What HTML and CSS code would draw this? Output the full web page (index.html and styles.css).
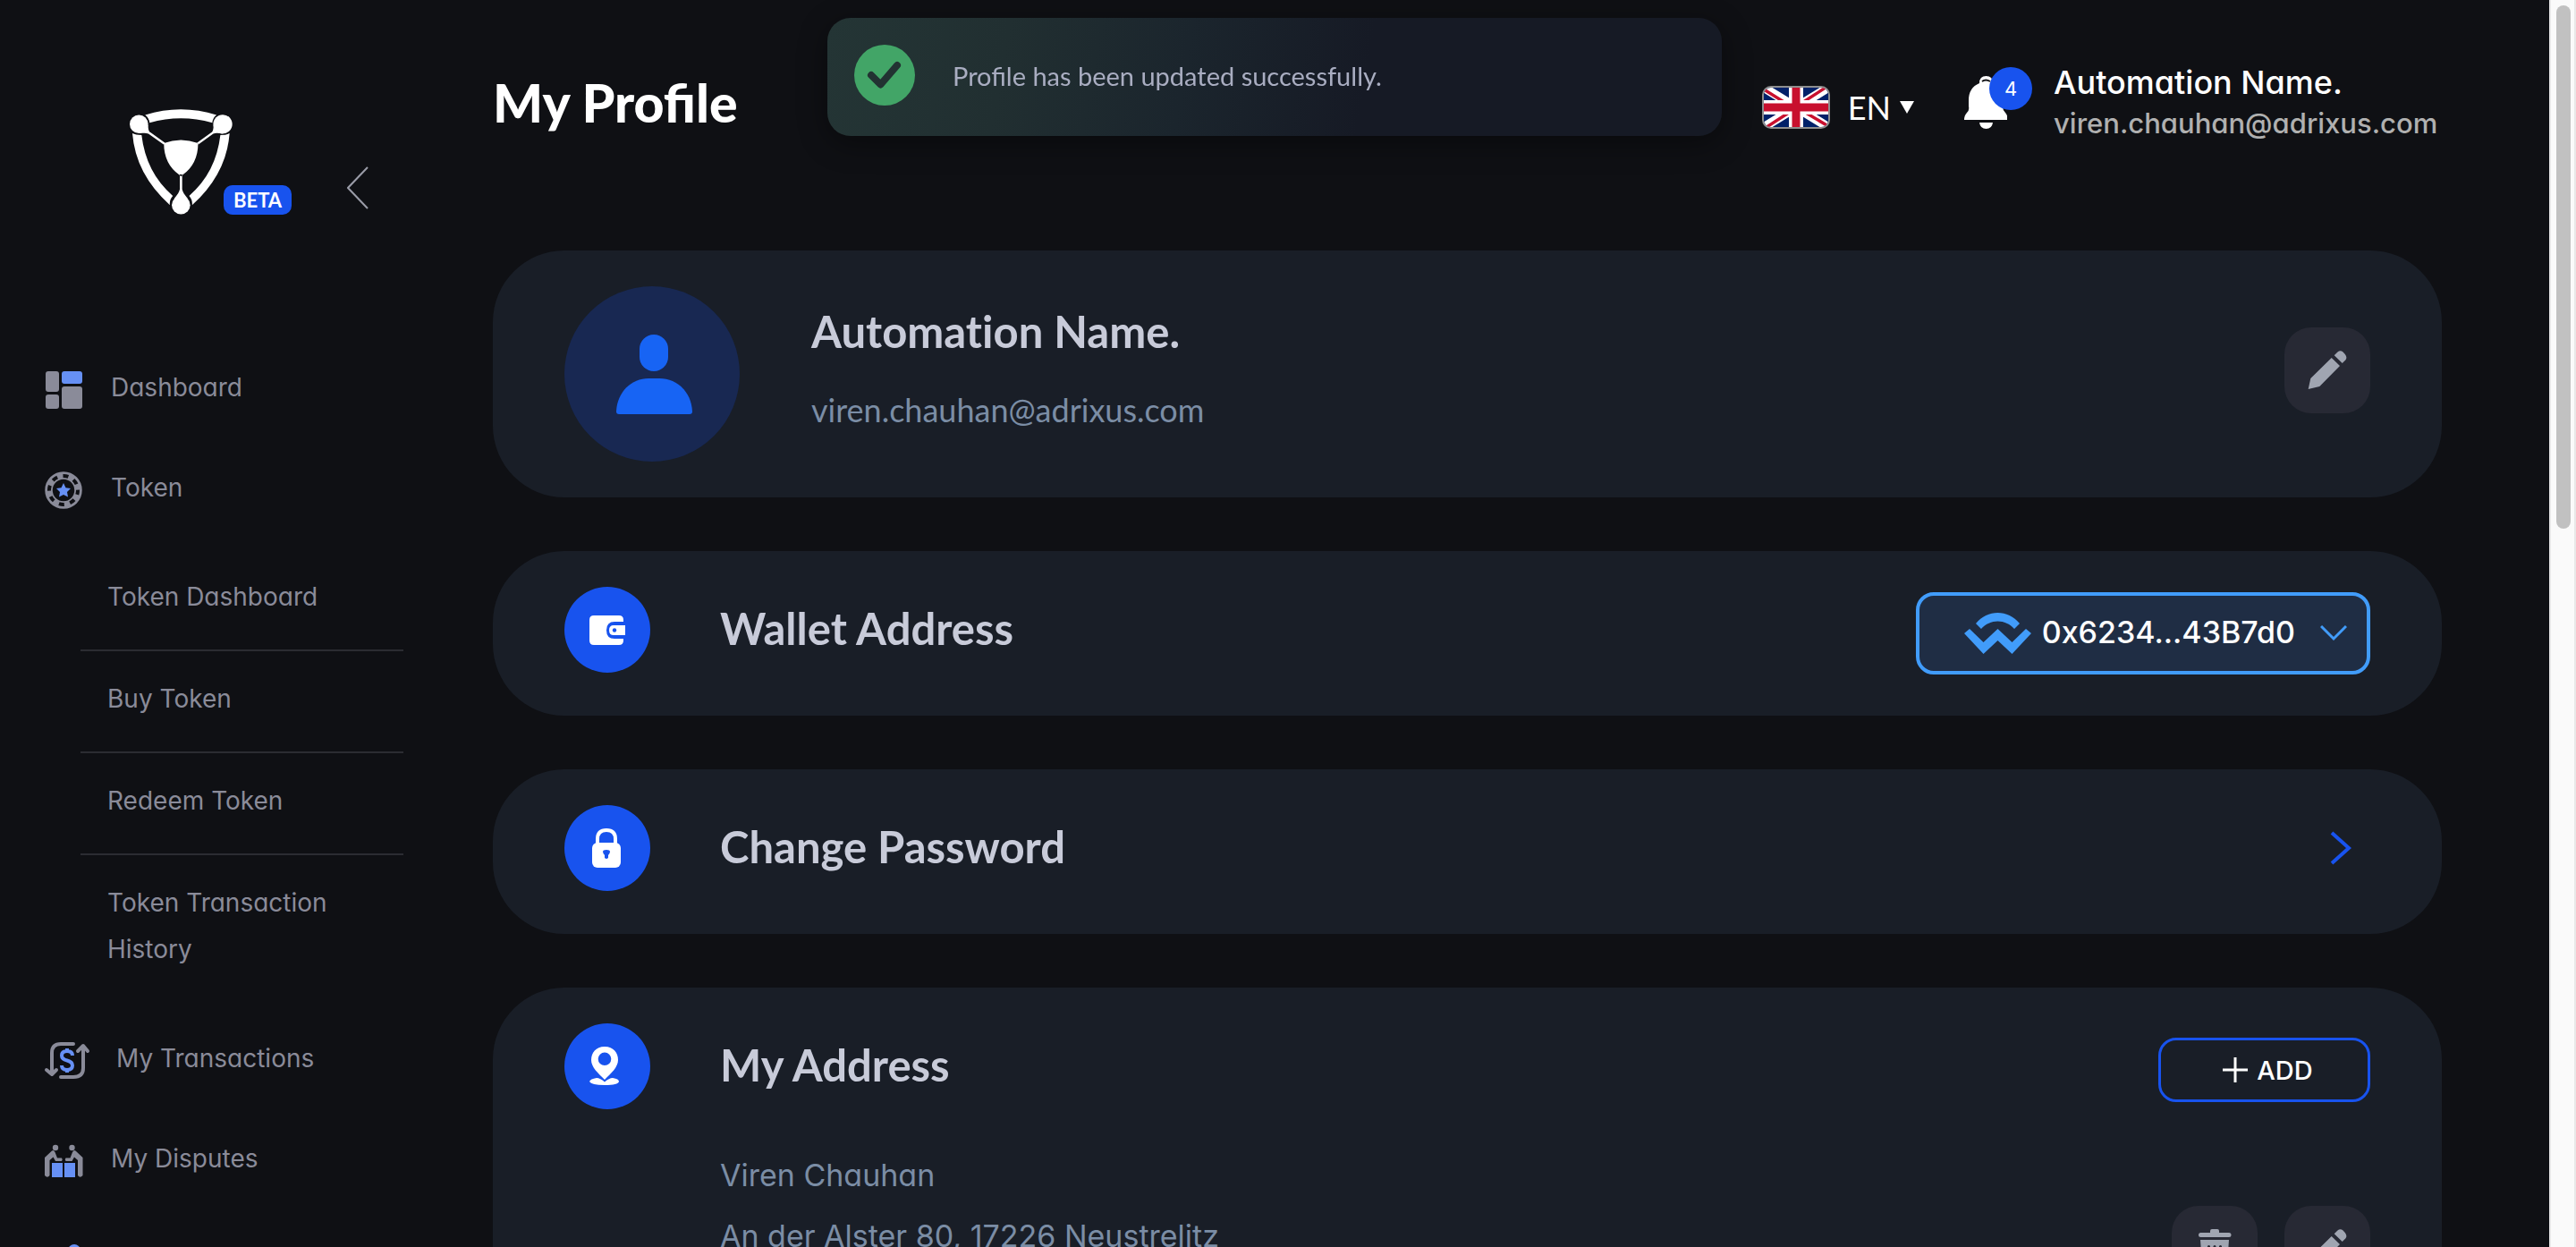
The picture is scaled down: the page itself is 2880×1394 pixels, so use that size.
FILE: index.html
```html
<!DOCTYPE html>
<html lang="en">
<head>
<meta charset="utf-8">
<title>My Profile</title>
<link rel="stylesheet" href="styles.css">
</head>
<body>
<svg class="defs" aria-hidden="true">
  <symbol id="pencil" viewBox="0 0 96 96"><path d="M52.700 34L62 43L39.300 66L26.700 69L29.300 57ZM55.700 31.300L59.500 27.500Q62.500 25 65.500 27.500L67.800 30Q70.500 33.500 68.500 36.300L64.700 40Z"/></symbol>
  <symbol id="trash" viewBox="0 0 96 96"><path fill-rule="evenodd" d="M43 30V28Q43 26 45 26H51Q53 26 53 28V30H64Q66.500 30 66.500 32.500T64 35H32.500Q30 35 30 32.500T32.500 30ZM32 38H64L62 66Q62 70 58 70H38Q34 70 34 66ZM40 45V62Q41.500 64 43 62V45Q41.500 43 40 45ZM46.500 45V62Q48 64 49.500 62V45Q48 43 46.500 45ZM53 45V62Q54.500 64 56 62V45Q54.500 43 53 45Z"/></symbol>
</svg>

<div class="shell">
  <aside class="sidebar">
    <div class="brand">
      <svg class="brand-logo" viewBox="435 126 346 354" role="img" aria-label="Logo">
        <path d="M487 145Q607 108 727 145Q714 155 713 171Q607 142 502 171Q500 155 487 145ZM444 207Q455 213 475 213Q490 340 580 417Q568 430 570 448Q455 345 444 207ZM771 207Q760 213 740 213Q725 340 635 417Q647 430 645 448Q760 345 771 207Z"/>
        <circle cx="466" cy="176" r="31"/><circle cx="748" cy="176" r="32"/><circle cx="607.500" cy="448" r="31"/>
        <path d="M497 178C497 195 500 201 505 204L553 238L549 244L498 208C490 205 480 206 466 207ZM717 178C717 195 714 201 710 204L662 238L666 244L716 208C724 205 735 206 748 208ZM603.500 345V395C602 405 596 412 585 426H630C619 412 613 405 611.500 395V345ZM550 240Q607 218 665 240Q665 310 613 347L607.500 352L602 347Q550 310 550 240Z"/>
      </svg>
      <span class="beta">BETA</span>
      <button class="collapse" aria-label="Collapse menu"><svg width="24" height="48" viewBox="0 0 24 48"><path d="M23 1L1 24L23 47" fill="none" stroke="#9a9ca8" stroke-width="2"/></svg></button>
    </div>
    <nav>
      <ul class="menu">
        <li><a class="menu-link" href="#"><svg class="menu-icon" width="42" height="42" viewBox="0 0 42 42"><rect x="1" width="15" height="23" rx="3"/><rect x="1" y="26" width="15" height="16" rx="3"/><rect class="accent" x="19" width="23" height="14" rx="3"/><rect x="19" y="17" width="23" height="25" rx="3"/></svg>Dashboard</a></li>
        <li>
          <a class="menu-link" href="#"><svg class="menu-icon" width="42" height="42" viewBox="0 0 42 42"><circle cx="21" cy="21" r="16.500" fill="none" stroke="#8a8b99" stroke-width="8.500"/><circle cx="21" cy="21" r="16" fill="none" stroke="#0f1014" stroke-width="4" stroke-dasharray="6 6.566" stroke-dashoffset="1"/><path class="accent" d="M21 13L23.500 18.300L29 19L25 23L26 28.500L21 26L16 28.500L17 23L13 19L18.500 18.300Z"/></svg>Token</a>
          <ul class="submenu">
            <li><a href="#">Token Dashboard</a></li>
            <li><a href="#">Buy Token</a></li>
            <li><a href="#">Redeem Token</a></li>
            <li><a href="#">Token Transaction History</a></li>
          </ul>
        </li>
        <li><a class="menu-link" href="#"><svg class="menu-icon" width="48" height="42" viewBox="0 0 48 42"><path d="M32 2H18Q8 2 8 12V35M2 31L8 36L13 31M18 39H32Q43 39 43 29V5M37 10L43 4L48 10" fill="none" stroke="#8a8b99" stroke-width="4" stroke-linecap="round" stroke-linejoin="round"/><path d="M31 15Q31 10 25 10T19 15Q19 19 25 20.500T31 26Q31 31 25 31T19 26M25 7V10M25 31V34" fill="none" stroke="#6690f5" stroke-width="4"/></svg>My Transactions</a></li>
        <li><a class="menu-link" href="#"><svg class="menu-icon" width="42" height="36" viewBox="0 0 42 36"><circle cx="12" cy="3" r="3.200"/><circle cx="30.500" cy="3" r="3.200"/><path d="M0 14L8 6.500Q10 5 11.500 8L14 14.500H19Q20.500 16 19 18H12L9.500 13.500L5.500 17V34Q3 37.500 0 34ZM42.500 14L34.500 6.500Q32.500 5 31 8L28.500 14.500H23.500Q22 16 23.500 18H30.500L33 13.500L37 17V34Q39.500 37.500 42.500 34Z"/><path class="accent" d="M8 20H20V36H8ZM22 20H34V36H22Z"/></svg>My Disputes</a></li>
        <li><a class="menu-link" href="#" aria-label="Users"><svg class="menu-icon" width="42" height="38" viewBox="0 0 42 38"><circle class="accent" cx="33" cy="7" r="7"/><path d="M4 38V20Q4 14 10 14H22V38Z"/></svg></a></li>
      </ul>
    </nav>
  </aside>

  <main class="main">
    <header class="topbar">
      <h1>My Profile</h1>
      <div class="topbar-tools">
        <button class="language" aria-haspopup="listbox">
          <svg class="flag" viewBox="0 0 72 44" preserveAspectRatio="none" aria-hidden="true"><path fill="#012169" d="M0 0H72V44H0Z"/><path d="M0 0L72 44M72 0L0 44" stroke="#fff" stroke-width="10"/><path d="M0 2L32 22M72 -2L38 20M34 24L0 46M40 24L72 43" stroke="#c8102e" stroke-width="3.500"/><path d="M36 0V44M0 22H72" stroke="#fff" stroke-width="16"/><path d="M36 0V44M0 22H72" stroke="#c8102e" stroke-width="9"/></svg>
          <span>EN</span>
          <svg width="16" height="14" viewBox="0 0 16 14" aria-hidden="true"><path fill="#fff" d="M0 0H16L8 14Z"/></svg>
        </button>
        <button class="bell" aria-label="Notifications">
          <svg width="48" height="60" viewBox="0 0 48 60"><path fill="#fff" d="M17 8Q17 0 24.500 0T32 8Q43 13 43 27V34Q43 38 46 41T48 49H0Q0 44 3 41T5 34V27Q5 13 17 8ZM17 52H32Q31 59 24.500 59T17 52Z"/><path d="M20 6Q24 3 29 6" fill="none" stroke="#0f1014" stroke-width="2"/></svg>
          <span class="badge">4</span>
        </button>
        <div class="account">
          <div class="account-name">Automation Name.</div>
          <div class="account-mail">viren.chauhan@adrixus.com</div>
        </div>
      </div>
    </header>

    <div class="cards">
      <section class="card profile">
        <svg class="avatar" viewBox="0 0 196 196" aria-hidden="true"><circle cx="98" cy="98" r="98" fill="#182852"/><rect x="84" y="54" width="32" height="41" rx="16" fill="#1764f4"/><path fill="#1764f4" d="M58 140C59 118 75 103 94 103H106C126 103 142 118 143 140Q143 143 140 143H61Q58 143 58 140Z"/></svg>
        <div class="profile-text">
          <h2>Automation Name.</h2>
          <p>viren.chauhan@adrixus.com</p>
        </div>
        <button class="square" aria-label="Edit profile"><svg><use href="#pencil"/></svg></button>
      </section>

      <section class="card row">
        <svg class="round" viewBox="0 0 96 96" aria-hidden="true"><circle cx="48" cy="48" r="48" fill="#1853ee"/><path fill="#fff" d="M33 32H61Q66 32 66 37V39H56Q47 39 47 48.500T56 58H66V60Q66 65 61 65H33Q28 65 28 60V37Q28 32 33 32ZM55 43H68V54H55Q50 54 50 48.500T55 43Z"/><circle cx="56" cy="48.500" r="2.200" fill="#1853ee"/></svg>
        <h2>Wallet Address</h2>
        <button class="wallet">
          <svg width="75" height="46" viewBox="0 0 75 46" aria-hidden="true"><path fill="#419cfa" d="M0 23L6 18L21.500 33L37.500 18L53.500 33L69 18L75 23L53.500 46L37.500 31L21.500 46ZM13 12C26 -4 49 -4 62 12L56 18C46 6.500 29 6.500 19 18Z"/></svg>
          <span>0x6234...43B7d0</span>
          <svg class="wallet-caret" width="30" height="18" viewBox="0 0 30 18" aria-hidden="true"><path d="M1 1L15 15L29 1" fill="none" stroke="#419cfa" stroke-width="3"/></svg>
        </button>
      </section>

      <section class="card row">
        <svg class="round" viewBox="0 0 96 96" aria-hidden="true"><circle cx="48" cy="48" r="48" fill="#1853ee"/><rect x="31" y="42" width="32" height="28" rx="6" fill="#fff"/><path d="M37 44V38Q37 28 47 28T57 38V44" fill="none" stroke="#fff" stroke-width="4"/><path fill="#1853ee" d="M43 52Q43 50 47 50T51 52Q51 54 49 56V59Q47 61 45 59V56Q43 54 43 52Z"/></svg>
        <h2>Change Password</h2>
        <a class="go" href="#" aria-label="Change password"><svg width="24" height="38" viewBox="0 0 24 38"><path d="M2 2L21 19L2 36" fill="none" stroke="#1853ee" stroke-width="4"/></svg></a>
      </section>

      <section class="card">
        <div class="row">
          <svg class="round" viewBox="0 0 96 96" aria-hidden="true"><circle cx="48" cy="48" r="48" fill="#1853ee"/><path fill="#fff" fill-rule="evenodd" d="M45 26C35 26 30 33 30 41C30 49 38 56 45 63C52 56 60 49 60 41C60 33 55 26 45 26ZM45 32.500A7.300 7.300 0 1 1 45 47.100A7.300 7.300 0 1 1 45 32.500ZM36 61Q40 61 45 65.500Q50 61 54 61Q61 62 61 65Q60 69 45 69T28 65Q29 62 36 61Z"/></svg>
          <h2>My Address</h2>
          <button class="add"><svg width="28" height="28" viewBox="0 0 28 28" aria-hidden="true"><path d="M14 0V28M0 14H28" stroke="#fff" stroke-width="3"/></svg>ADD</button>
        </div>
        <div class="address">
          <address>Viren Chauhan<br>An der Alster 80, 17226 Neustrelitz</address>
          <div class="address-tools">
            <button class="square" aria-label="Delete address"><svg><use href="#trash"/></svg></button>
            <button class="square" aria-label="Edit address"><svg><use href="#pencil"/></svg></button>
          </div>
        </div>
      </section>
    </div>
  </main>

  <div class="scrollbar" aria-hidden="true"><div class="thumb"></div></div>
</div>

<div class="toast" role="status">
  <svg width="68" height="68" viewBox="0 0 68 68" aria-hidden="true"><circle cx="34" cy="34" r="34" fill="#42a567"/><path d="M19 34L29.500 44.500L48 23" fill="none" stroke="#223232" stroke-width="8" stroke-linecap="round" stroke-linejoin="round"/></svg>
  <p>Profile has been updated successfully.</p>
</div>
</body>
</html>
```
FILE: styles.css
```css
* { box-sizing: border-box; margin: 0; padding: 0; }

body {
  background: #0f1014;
  color: #fff;
  font-family: Inter, "Liberation Sans", sans-serif;
  font-size: 28px;
  font-feature-settings: "cv11";
}

button {
  background: none;
  border: 0;
  color: inherit;
  font: inherit;
  font-feature-settings: inherit;
  cursor: pointer;
}

svg { display: block; flex: none; }
a { color: inherit; text-decoration: none; }
ul { list-style: none; }
.defs { display: none; }

.shell {
  display: grid;
  grid-template-columns: 551px 1fr 30px;
  height: 100vh;
  overflow: hidden;
}

/* Sidebar */
.sidebar { overflow: hidden; color: #8a8b99; }

.brand {
  display: flex;
  align-items: flex-end;
  padding: 122px 0 137px 145px;
}
.brand-logo { width: 115px; height: 118px; fill: #fff; }
.beta {
  margin-left: -10px;
  padding: 0 11px;
  border-radius: 10px;
  background: #1853ee;
  color: #fff;
  font: 700 22px/33px Lato, sans-serif;
}
.collapse { margin: 0 0 6px 62px; }

.menu-link {
  display: flex;
  align-items: center;
  gap: 32px;
  min-height: 112px;
  padding: 30px 0 30px 50px;
  line-height: 52px;
}
.menu-icon { overflow: visible; margin-top: 6px; fill: #8a8b99; }
.accent { fill: #6690f5; }

.submenu { margin: 13px 100px 7px 90px; }
.submenu li { padding: 27px 30px 33px; line-height: 52px; }
.submenu li + li { border-top: 2px solid #2b2c32; }

/* Top bar */
.main { padding-right: 120px; overflow: hidden; }

.topbar {
  display: flex;
  align-items: center;
  justify-content: space-between;
  padding: 69px 0 119px;
}
h1 { font: 900 59px/84px Lato, sans-serif; }

.topbar-tools { display: flex; align-items: center; }
.language {
  display: flex;
  align-items: center;
  gap: 10px;
  padding-top: 10px;
  font: 400 36px/48px Lato, sans-serif;
}
.flag {
  width: 76px;
  height: 48px;
  margin-right: 10px;
  border: 2px solid #8e8e8e;
  border-radius: 10px;
}
.bell { position: relative; margin: 0 52px 0 56px; }
.badge {
  position: absolute;
  top: -10px;
  left: 28px;
  width: 48px;
  border-radius: 50%;
  background: #1853ee;
  font-size: 22px;
  line-height: 48px;
}
.account { min-width: 434px; font-weight: 500; line-height: 46px; }
.account-name { font-size: 36px; }
.account-mail { color: #b0b0b0; font-size: 31px; }

/* Cards */
.cards { display: grid; gap: 60px; }
.card {
  padding: 40px 80px 48px;
  border-radius: 80px;
  background: #191e27;
}
h2 {
  flex: 1;
  color: #c8cbd9;
  font: 700 49px/72px Lato, sans-serif;
  font-variant-ligatures: none;
}

.profile { display: flex; align-items: center; gap: 80px; padding-bottom: 40px; }
.avatar { width: 196px; height: 196px; }
.profile-text { flex: 1; align-self: flex-start; padding-top: 14px; }
.profile-text p {
  margin-top: 26px;
  color: #7b8da5;
  font: 400 36px/52px Lato, sans-serif;
}

.row { display: flex; align-items: center; gap: 78px; }
.row h2 { padding-bottom: 4px; }
.round { width: 96px; height: 96px; }

.square { border-radius: 30px; background: #272934; }
.square svg { width: 96px; height: 96px; fill: #a0a5b1; }
.profile .square { margin-bottom: 8px; }

.wallet {
  display: flex;
  align-items: center;
  gap: 12px;
  height: 92px;
  margin: 4px 0 -4px;
  padding: 0 22px 0 50px;
  border: 4px solid #419cfa;
  border-radius: 20px;
  background: #1f2d44;
  font-size: 34px;
  font-weight: 500;
}
.wallet span { padding-bottom: 4px; }
.wallet-caret { margin-left: 16px; }
.go { margin-right: 21px; }

.add {
  display: flex;
  align-items: center;
  justify-content: center;
  gap: 10px;
  width: 237px;
  height: 72px;
  margin-top: 8px;
  padding-left: 8px;
  border: 3px solid #1853ee;
  border-radius: 20px;
  font-size: 29px;
  font-weight: 500;
}

.address {
  display: flex;
  justify-content: space-between;
  padding: 40px 0 0 174px;
}
address { color: #7b8da5; font-size: 34px; font-style: normal; line-height: 68px; }
.address-tools { display: flex; align-items: flex-start; gap: 30px; padding-top: 68px; }

/* Page scrollbar */
.scrollbar {
  padding: 6px;
  border: solid #e8e8e8;
  border-width: 0 2px;
  background: #fafafa;
}
.thumb { width: 16px; height: 42vh; border-radius: 8px; background: #c1c1c1; }

/* Toast */
.toast {
  position: fixed;
  top: 20px;
  right: 30px;
  left: 0;
  display: flex;
  align-items: center;
  gap: 42px;
  width: 1000px;
  min-height: 132px;
  margin: 0 auto;
  padding: 0 30px 4px;
  border-radius: 26px;
  background: linear-gradient(100deg, #243535, #212f31 20%, #1b252d 40%, #161a25 60%);
  box-shadow: 0 8px 32px rgba(0, 0, 0, .4);
  color: #a9adc1;
  font: 400 29px/40px Lato, sans-serif;
}
.toast p { padding-top: 2px; }
```
